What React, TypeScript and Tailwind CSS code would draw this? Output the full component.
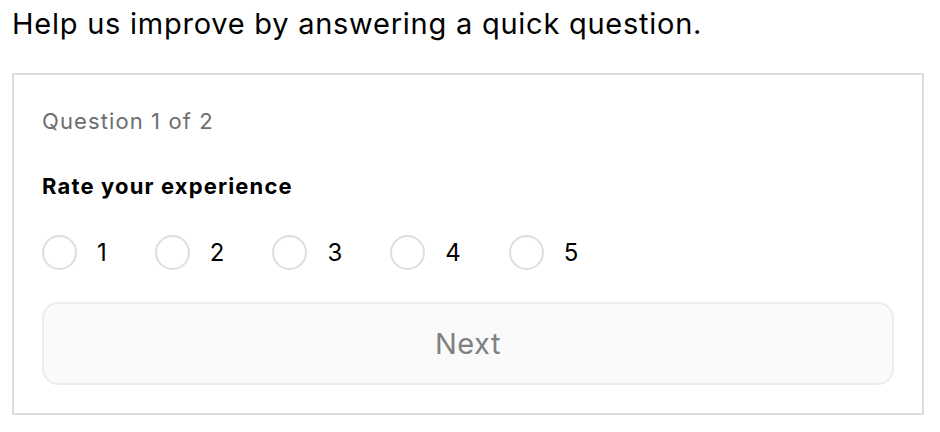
export default function App() {
  const options = [1, 2, 3, 4, 5];

  return (
    <main className="min-h-screen bg-white px-3 pt-[6px] font-['Inter',sans-serif] text-black">
      {/* Intro */}
      <p className="text-[29px] leading-[36px] tracking-[0.75px]">
        Help us improve by answering a quick question.
      </p>

      {/* Survey card */}
      <section className="mt-[31px] w-[912px] border-2 border-[#dddddd] px-[28px] pt-[28px] pb-[28px]">
        <p className="text-[22px] leading-[36px] tracking-[1.1px] text-[#6e6e6e]">
          Question 1 of 2
        </p>

        <h2 className="mt-[33px] text-[22px] font-bold leading-[28px] tracking-[1.15px]">
          Rate your experience
        </h2>

        <div className="mt-[35px] flex items-center gap-[48px]">
          {options.map((n) => (
            <label key={n} className="flex items-center gap-5">
              <span className="block h-[35px] w-[35px] rounded-full border-2 border-[#dedede] bg-white" />
              <span className="text-[24px] leading-[35px]">{n}</span>
            </label>
          ))}
        </div>

        <button
          type="button"
          className="mt-[32px] flex h-[83px] w-full items-center justify-center rounded-[16px] border-2 border-[#ededed] bg-[#fafafa] text-[29px] tracking-[0.5px] text-[#808080]"
        >
          Next
        </button>
      </section>
    </main>
  );
}
